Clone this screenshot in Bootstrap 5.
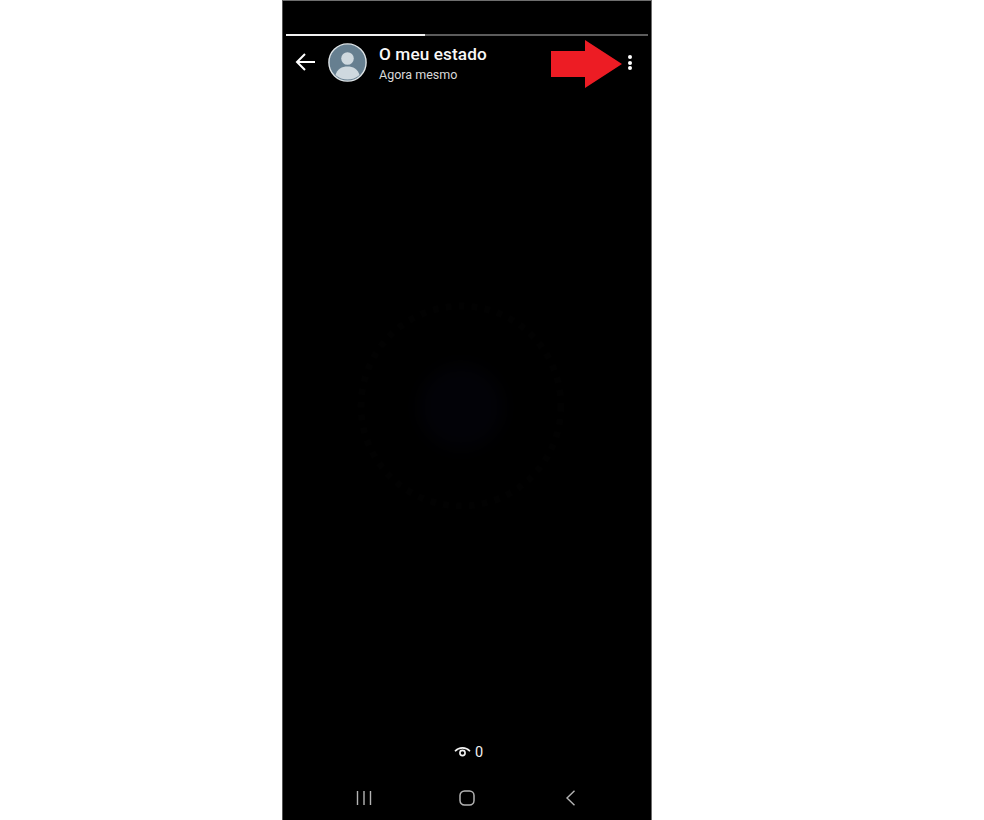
<!DOCTYPE html>
<html lang="pt">
<head>
<meta charset="utf-8">
<title>O meu estado</title>
<link rel="stylesheet" href="https://cdn.jsdelivr.net/npm/bootstrap@5.3.0/dist/css/bootstrap.min.css">
<style>
html, body { height: 100%; background: #fff; overflow: hidden; }
.stage { height: 820px; padding-left: 282px; }
.phone { position: relative; width: 370px; height: 820px; background: #000; border: 1px solid #6e6e6e; border-bottom: 0; border-left-color: #555; font-family: Roboto, "Liberation Sans", sans-serif; color: #fff; }
.glow { position: absolute; left: 136px; top: 364px; width: 84px; height: 84px; border-radius: 50%; background: #020207; filter: blur(8px); }
.ring { position: absolute; left: 69px; top: 296px; width: 218px; height: 218px; }
.prog { margin: 33px 3px 0 3px; height: 2px; background: #5c5c5c; }
.prog-fill { width: 139px; height: 100%; background: #f0f0f0; }
.head { height: 56px; padding: 0 0 0 11px; margin-top: -2px; }
.back { width: 22px; height: 22px; }
.avatar { width: 39px; height: 39px; margin-left: 12px; flex: none; }
.who { margin-left: 12px; margin-top: 3px; }
.who-name { font-size: 17.2px; font-weight: 500; line-height: 20px; letter-spacing: .1px; color: #f8f8f8; }
.who-time { font-size: 12.5px; line-height: 16px; color: #d9d9d9; margin-top: 3px; }
.dots { width: 4px; margin-left: auto; margin-right: 19px; margin-top: 1px; gap: 1.7px; }
.dot { width: 4px; height: 4px; border-radius: 50%; background: #fff; }
.arrow { position: absolute; left: 268px; top: 39px; width: 71px; height: 48px; }
.foot { position: absolute; left: 0; right: 0; bottom: 0; }
.views { height: 20px; margin-left: 3px; font-size: 14.5px; line-height: 20px; color: #f0f0f0; }
.views-num { margin-top: 1px; }
.navi { height: 44px; margin-top: 14px; padding: 0 74px 0 72px; }
.navi-home { margin-right: 4px; }
</style>
</head>
<body class="m-0">
<div class="stage">
  <div class="phone d-flex flex-column">
    <svg class="ring" viewBox="0 0 218 218" fill="none" stroke="#020202"><circle cx="109" cy="109" r="100" stroke-width="7" stroke-dasharray="6 7"/></svg>
    <div class="glow"></div>
    <div class="prog"><div class="prog-fill"></div></div>
    <div class="head d-flex align-items-center">
      <svg class="back" viewBox="0 0 22 22" fill="none" stroke="#fff" stroke-width="2"><path d="M21 11H3M11 3l-8 8 8 8"/></svg>
      <svg class="avatar" viewBox="0 0 39 39">
        <circle cx="19.5" cy="19.5" r="18.6" fill="#667f90" stroke="#dfe5e8" stroke-width="1.4"/>
        <circle cx="19.5" cy="15.5" r="6.3" fill="#cfd9df"/>
        <path d="M7.5 32c1.5-6 6.5-8.5 12-8.5S30 26 31.5 32a18 18 0 0 1-24 0z" fill="#cfd9df"/>
      </svg>
      <div class="who">
        <div class="who-name">O meu estado</div>
        <div class="who-time">Agora mesmo</div>
      </div>
      <div class="dots d-flex flex-column"><div class="dot"></div><div class="dot"></div><div class="dot"></div></div>
    </div>
    <svg class="arrow" viewBox="0 0 71 48"><path d="M0 11h34V0l37 24-37 24V37H0z" fill="#ed1c24"/></svg>
    <div class="foot">
      <div class="views d-flex justify-content-center align-items-center gap-1">
        <svg width="17" height="12" viewBox="0 0 17 12" fill="none" stroke="#f2f2f2"><path d="M1 5.2C5 .8 12 .8 16 5.2" stroke-width="1.6"/><circle cx="8.5" cy="7" r="2.6" stroke-width="1.6"/></svg>
        <span class="views-num">0</span>
      </div>
      <div class="navi d-flex justify-content-between align-items-center">
        <svg width="18" height="16" viewBox="0 0 18 16" fill="none" stroke="#b4b4b4" stroke-width="1.4"><path d="M2.5 1v14M9 1v14M15.5 1v14"/></svg>
        <svg class="navi-home" width="16" height="16" viewBox="0 0 16 16" fill="none" stroke="#b4b4b4" stroke-width="1.5"><rect x="1" y="1" width="14" height="14" rx="4.5"/></svg>
        <svg width="12" height="16" viewBox="0 0 12 16" fill="none" stroke="#b4b4b4" stroke-width="1.4"><path d="M9.5 .8 2 8l7.5 7.2"/></svg>
      </div>
    </div>
  </div>
</div>
<script src="https://cdn.jsdelivr.net/npm/bootstrap@5.3.0/dist/js/bootstrap.bundle.min.js"></script>
</body>
</html>
